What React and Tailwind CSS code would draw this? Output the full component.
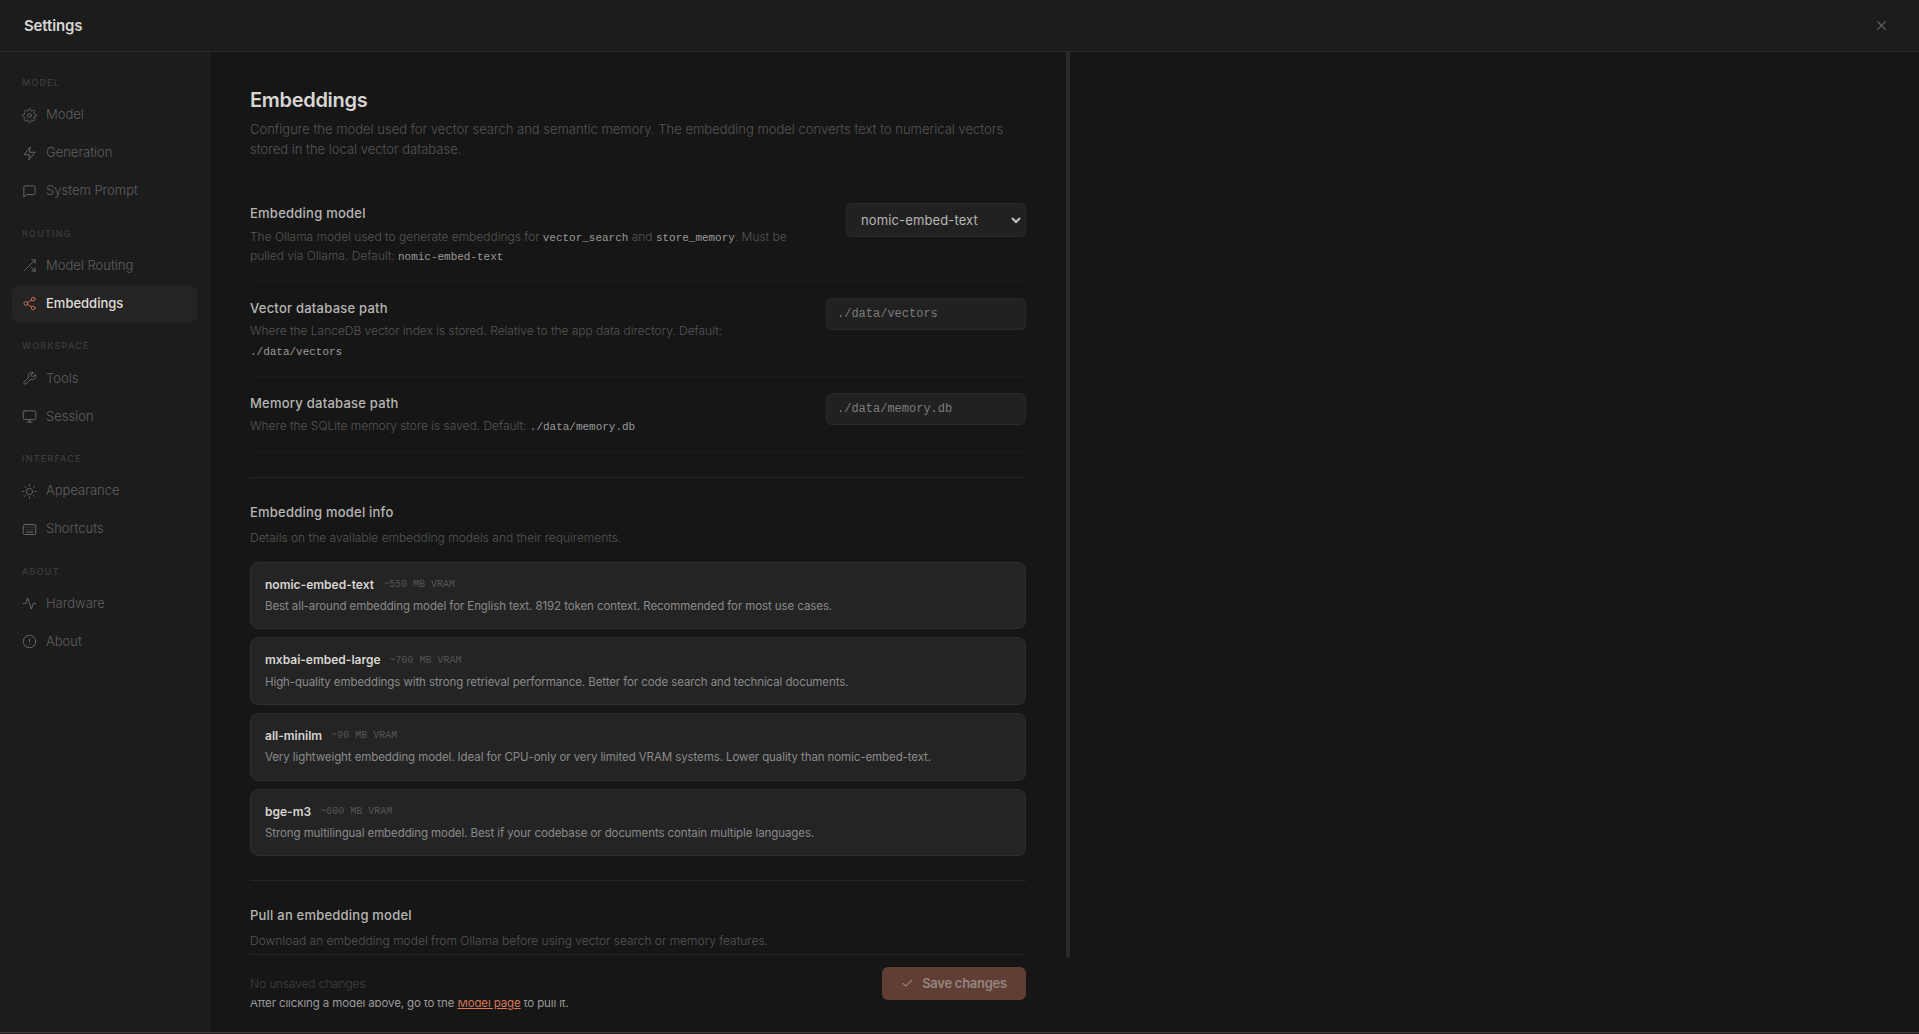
import { useState } from 'react';
import {
  FiSettings,
  FiZap,
  FiMessageSquare,
  FiShare2,
  FiMonitor,
  FiSun,
  FiActivity,
  FiAlertCircle,
  FiX,
  FiCheck,
  FiTool,
} from 'react-icons/fi';

const NAV = [
  {
    title: 'Model',
    items: [
      { key: 'model', label: 'Model', icon: FiSettings },
      { key: 'generation', label: 'Generation', icon: FiZap },
      { key: 'prompt', label: 'System Prompt', icon: FiMessageSquare },
    ],
  },
  {
    title: 'Routing',
    items: [
      { key: 'routing', label: 'Model Routing', icon: RouteIcon },
      { key: 'embeddings', label: 'Embeddings', icon: FiShare2 },
    ],
  },
  {
    title: 'Workspace',
    items: [
      { key: 'tools', label: 'Tools', icon: FiTool },
      { key: 'session', label: 'Session', icon: FiMonitor },
    ],
  },
  {
    title: 'Interface',
    items: [
      { key: 'appearance', label: 'Appearance', icon: FiSun },
      { key: 'shortcuts', label: 'Shortcuts', icon: KeyboardIcon },
    ],
  },
  {
    title: 'About',
    items: [
      { key: 'hardware', label: 'Hardware', icon: FiActivity },
      { key: 'about', label: 'About', icon: FiAlertCircle },
    ],
  },
];

const MODELS = [
  {
    name: 'nomic-embed-text',
    vram: '~550 MB VRAM',
    desc: 'Best all-around embedding model for English text. 8192 token context. Recommended for most use cases.',
  },
  {
    name: 'mxbai-embed-large',
    vram: '~700 MB VRAM',
    desc: 'High-quality embeddings with strong retrieval performance. Better for code search and technical documents.',
  },
  {
    name: 'all-minilm',
    vram: '~90 MB VRAM',
    desc: 'Very lightweight embedding model. Ideal for CPU-only or very limited VRAM systems. Lower quality than nomic-embed-text.',
  },
  {
    name: 'bge-m3',
    vram: '~600 MB VRAM',
    desc: 'Strong multilingual embedding model. Best if your codebase or documents contain multiple languages.',
  },
];

export default function App() {
  const [active, setActive] = useState('embeddings');
  const [model, setModel] = useState('nomic-embed-text');

  return (
    <div className="flex h-screen flex-col overflow-hidden bg-[#161616] font-['Inter',sans-serif] text-[#9a9a9a]">
      <header className="flex h-[52px] shrink-0 items-center justify-between border-b border-[#2a2a2a] bg-[#1c1c1c] px-6">
        <h1 className="pt-0.5 text-[15px] font-semibold tracking-[-0.15px] text-[#d8d6d3]">Settings</h1>
        <button className="flex size-7 items-center justify-center text-[#5c5c5c]" aria-label="Close">
          <FiX size={15} strokeWidth={2} />
        </button>
      </header>

      <div className="flex min-h-0 flex-1">
        <nav className="w-[210px] shrink-0 border-r border-[#232323] bg-[#1c1c1c] px-3 pt-[23px]">
          {NAV.map((group) => (
            <div key={group.title} className="mb-[16.7px]">
              <p className="mb-[7px] px-2.5 text-[9px] leading-[15px] font-medium tracking-[1.2px] text-[#3c3c3c] uppercase">
                {group.title}
              </p>
              {group.items.map((item) => (
                <NavItem
                  key={item.key}
                  item={item}
                  active={active === item.key}
                  onClick={() => setActive(item.key)}
                />
              ))}
            </div>
          ))}
        </nav>

        <main className="flex w-[860px] flex-none">
          <div className="min-w-0 flex-1 overflow-hidden px-10 pt-[35px] pb-8">
            <h2 className="text-xl leading-[26px] font-semibold tracking-[-0.3px] text-[#d8d6d3]">Embeddings</h2>
            <p className="mt-[7px] mb-7 text-[13px] leading-[19.5px] font-light text-[#555]">
              Configure the model used for vector search and semantic memory. The embedding model converts text to
              numerical vectors stored in the local vector database.
            </p>

            <Row
              label="Embedding model"
              desc={
                <>
                  The Ollama model used to generate embeddings for <Code>vector_search</Code> and{' '}
                  <Code>store_memory</Code>. Must be pulled via Ollama. Default: <Code>nomic-embed-text</Code>
                </>
              }
            >
              <div className="relative">
                <select
                  value={model}
                  onChange={(e) => setModel(e.target.value)}
                  className="block h-[34px] w-[180px] appearance-none rounded-md border border-[#2a2a2a] bg-[#212121] px-3.5 pt-px text-[13px] tracking-[0.13px] text-[#b8b6b3] outline-none"
                >
                  {MODELS.map((m) => (
                    <option key={m.name}>{m.name}</option>
                  ))}
                </select>
                <svg
                  className="pointer-events-none absolute top-3.5 right-[5px] text-[#c4c4c4]"
                  width="10"
                  height="7"
                  viewBox="0 0 10 7"
                  fill="none"
                  stroke="currentColor"
                  strokeWidth="2"
                >
                  <path d="M1 1l4 4 4-4" />
                </svg>
              </div>
            </Row>
            <Row
              label="Vector database path"
              desc={
                <>
                  Where the LanceDB vector index is stored. Relative to the app data directory. Default:{' '}
                  <Code>./data/vectors</Code>
                </>
              }
            >
              <PathInput value="./data/vectors" />
            </Row>
            <Row
              label="Memory database path"
              desc={
                <>
                  Where the SQLite memory store is saved. Default: <Code>./data/memory.db</Code>
                </>
              }
            >
              <PathInput value="./data/memory.db" />
            </Row>

            <hr className="mt-6 border-[#252525]" />

            <SectionTitle title="Embedding model info" desc="Details on the available embedding models and their requirements." />
            <div className="mt-[15px] flex flex-col gap-2">
              {MODELS.map((m) => (
                <ModelCard key={m.name} {...m} />
              ))}
            </div>

            <hr className="mt-6 border-[#252525]" />

            <SectionTitle
              title="Pull an embedding model"
              desc="Download an embedding model from Ollama before using vector search or memory features."
            />
            <p className="mt-[44px] text-[11.5px] leading-[18px] tracking-[-0.12px] text-[#9a9a9a]">
              After clicking a model above, go to the{' '}
              <a href="#model" className="text-[#d97757] underline">
                Model page
              </a>{' '}
              to pull it.
            </p>

            {/* Save bar */}
            <div className="sticky bottom-0 flex items-center justify-between border-t border-[#252525] bg-[#161616] pt-3">
              <span className="text-xs font-light tracking-[-0.15px] text-[#404040]">No unsaved changes</span>
              <button
                disabled
                className="flex h-[33px] w-36 items-center justify-center gap-2 rounded-md bg-[#613e33] text-[13px] font-semibold tracking-[-0.28px] text-[#94857f]"
              >
                <FiCheck size={13} strokeWidth={2} />
                Save changes
              </button>
            </div>
          </div>
          {/* Scroll thumb */}
          <div className="h-[906px] w-1 shrink-0 rounded-b-full bg-[#2a2a2a]" />
        </main>
      </div>
      <div className="h-0.5 shrink-0 border-t border-[#424242] bg-[#1e1618]" />
    </div>
  );
}

function NavItem({ item, active, onClick }) {
  const Icon = item.icon;
  return (
    <button
      onClick={onClick}
      className={`mb-0.5 flex h-9 w-[185px] items-center gap-[9px] rounded-md px-2.5 text-[13px] ${
        active ? 'bg-[#242424] font-medium text-[#e0deda]' : 'font-light text-[#5f5f5f]'
      }`}
    >
      <Icon size={15} strokeWidth={1.6} className={active ? 'text-[#c56c50]' : 'text-[#666]'} />
      {item.label}
    </button>
  );
}

function Row({ label, desc, children }) {
  return (
    <div className="flex items-start justify-between gap-8 border-b border-[#1c1c1c] py-4">
      <div className="w-[540px]">
        <p className="pt-px text-[13px] leading-[19.5px] font-medium tracking-[0.24px] text-[#b8b6b3]">{label}</p>
        <p className="mt-[3px] text-xs leading-[19.2px] font-light tracking-[-0.02px] text-[#555]">{desc}</p>
      </div>
      {children}
    </div>
  );
}

function Code({ children }) {
  return (
    <code className="font-['Liberation_Mono',monospace] text-[11px] leading-none font-normal text-[#9a9a9a]">
      {children}
    </code>
  );
}

function PathInput({ value }) {
  return (
    <input
      defaultValue={value}
      className="h-8 w-[200px] rounded-md border border-[#2a2a2a] bg-[#212121] px-2.5 pt-px font-['Liberation_Mono',monospace] text-xs text-[#7c7c7c] outline-none"
    />
  );
}

function SectionTitle({ title, desc }) {
  return (
    <div className="mt-6">
      <h3 className="text-[13px] leading-5 font-medium tracking-[0.22px] text-[#b8b6b3]">{title}</h3>
      <p className="mt-1.5 text-xs leading-[19px] font-light text-[#555]">{desc}</p>
    </div>
  );
}

function ModelCard({ name, vram, desc }) {
  return (
    <div className="h-[67.7px] rounded-lg border border-[#2e2e2e] bg-[#242424] px-3.5 pt-[12.5px]">
      <div className="flex items-center gap-[9px] leading-[18px]">
        <span className="text-xs font-semibold text-[#d8d6d3]">{name}</span>
        <span className="pt-px font-['Liberation_Mono',monospace] text-[10px] text-[#555]">{vram}</span>
      </div>
      <p className="mt-[3px] text-[11.5px] leading-[18px] tracking-[-0.09px] text-[#8a8a8a]">{desc}</p>
    </div>
  );
}

function Svg({ size, strokeWidth, className, children }) {
  return (
    <svg
      width={size}
      height={size}
      viewBox="0 0 24 24"
      fill="none"
      stroke="currentColor"
      strokeWidth={strokeWidth}
      strokeLinecap="round"
      strokeLinejoin="round"
      className={className}
    >
      {children}
    </svg>
  );
}

function RouteIcon(props) {
  return (
    <Svg {...props}>
      <path d="M16 3h5v5M4 20 21 3M21 16v5h-5M15 15l6 6" />
    </Svg>
  );
}

function KeyboardIcon(props) {
  return (
    <Svg {...props}>
      <rect x="2" y="4" width="20" height="16" rx="2" />
      <path d="M6 8h.01M10 8h.01M14 8h.01M18 8h.01M8 12h.01M12 12h.01M16 12h.01M7 16h10" />
    </Svg>
  );
}
